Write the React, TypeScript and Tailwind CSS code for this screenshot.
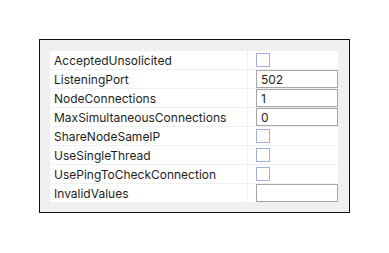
import React from 'react';

type Row = { name: string; kind: 'check' | 'text'; value?: string };

const rows: Row[] = [
  { name: 'AcceptedUnsolicited', kind: 'check' },
  { name: 'ListeningPort', kind: 'text', value: '502' },
  { name: 'NodeConnections', kind: 'text', value: '1' },
  { name: 'MaxSimultaneousConnections', kind: 'text', value: '0' },
  { name: 'ShareNodeSameIP', kind: 'check' },
  { name: 'UseSingleThread', kind: 'check' },
  { name: 'UsePingToCheckConnection', kind: 'check' },
  { name: 'InvalidValues', kind: 'text', value: '' },
];

export default function App() {
  return (
    <div className="w-[389px] h-[253px] bg-white pt-[39px] pl-[39px] font-['Inter',sans-serif] text-[12px] text-[#1e1e1e]">
      <div className="w-[311px] h-[174px] border border-[#111] bg-[#f0f0f0] pt-[11px] pl-[10px]">
        <div className="grid grid-cols-[197px_90px] gap-px w-[288px]">
          {rows.map((r) => (
            <React.Fragment key={r.name}>
              <div className="h-[18px] bg-white pl-1 pt-px flex items-center leading-none">{r.name}</div>
              <div className="h-[18px] bg-white pl-2 flex items-center">
                {r.kind === 'check' ? (
                  <span className="w-[14px] h-[14px] border border-[#a3afdc] bg-white" />
                ) : (
                  <span className="w-[82px] h-[18px] border border-[#a6a6a6] bg-white pl-1 pt-px flex items-center leading-none">{r.value}</span>
                )}
              </div>
            </React.Fragment>
          ))}
        </div>
      </div>
    </div>
  );
}
